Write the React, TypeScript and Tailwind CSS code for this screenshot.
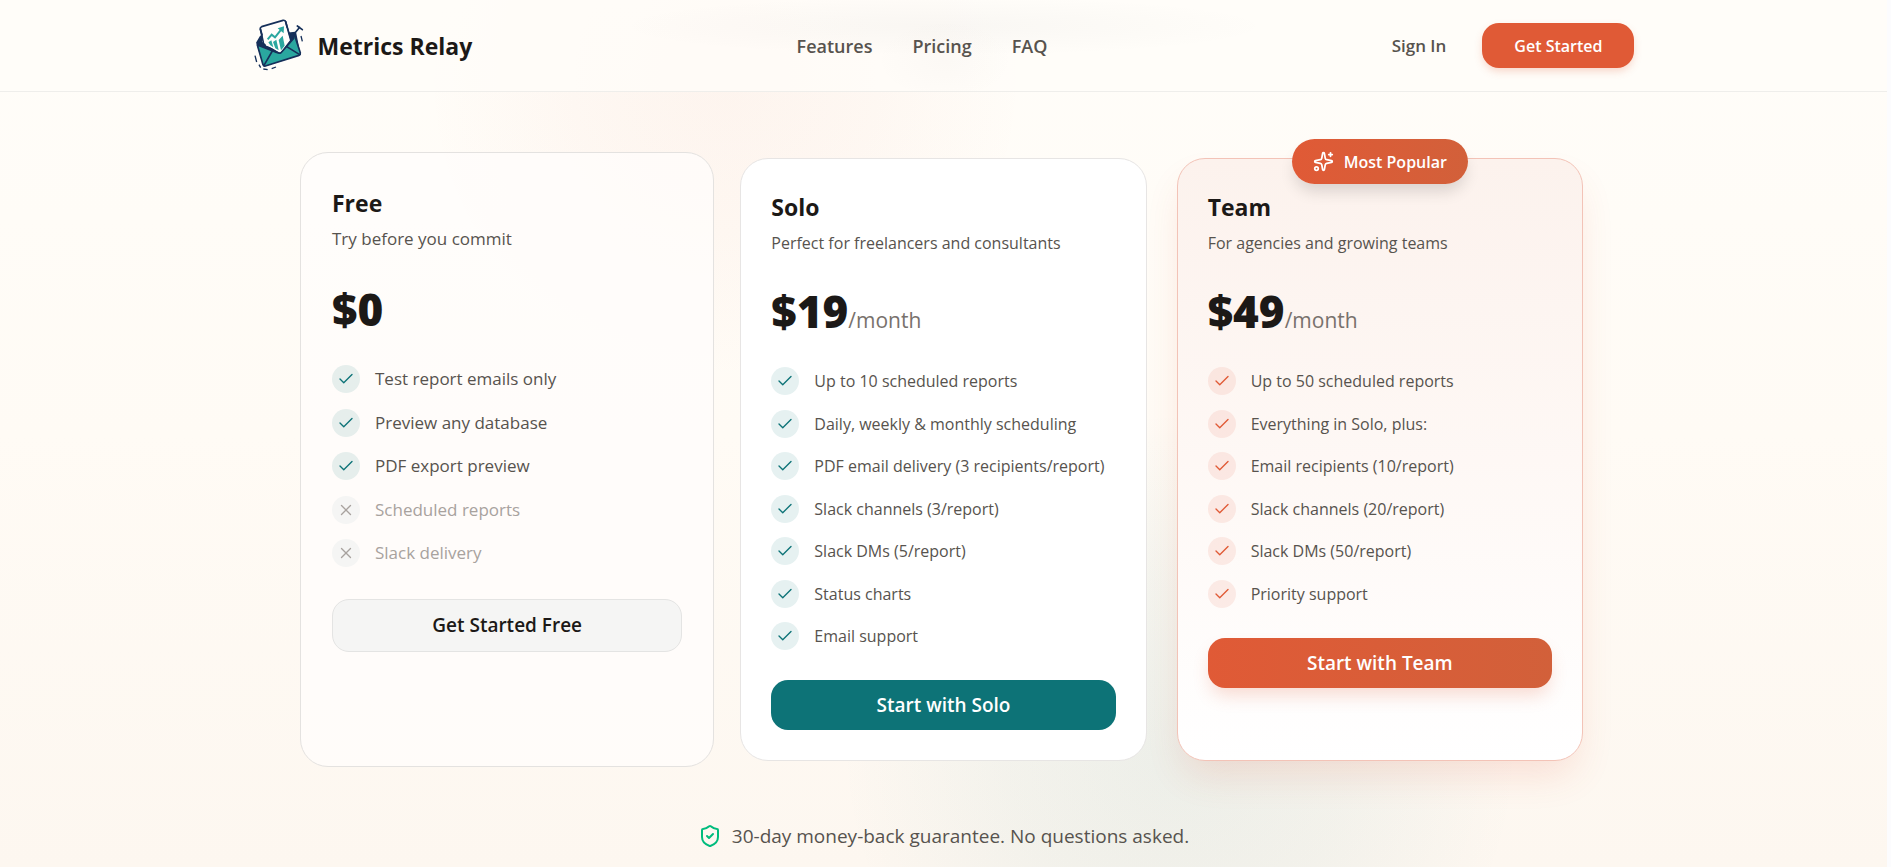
import React from "react";
import { Check, ShieldCheck, Sparkles, X } from "lucide-react";

type Tone = "free" | "solo" | "team";

interface Feature {
  label: string;
  included: boolean;
}

interface Plan {
  tone: Tone;
  name: string;
  description: string;
  price: string;
  period?: string;
  features: Feature[];
  cta: string;
}

const yes = (label: string): Feature => ({ label, included: true });
const no = (label: string): Feature => ({ label, included: false });

const plans: Plan[] = [
  {
    tone: "free",
    name: "Free",
    description: "Try before you commit",
    price: "$0",
    features: [
      yes("Test report emails only"),
      yes("Preview any database"),
      yes("PDF export preview"),
      no("Scheduled reports"),
      no("Slack delivery"),
    ],
    cta: "Get Started Free",
  },
  {
    tone: "solo",
    name: "Solo",
    description: "Perfect for freelancers and consultants",
    price: "$19",
    period: "/month",
    features: [
      yes("Up to 10 scheduled reports"),
      yes("Daily, weekly & monthly scheduling"),
      yes("PDF email delivery (3 recipients/report)"),
      yes("Slack channels (3/report)"),
      yes("Slack DMs (5/report)"),
      yes("Status charts"),
      yes("Email support"),
    ],
    cta: "Start with Solo",
  },
  {
    tone: "team",
    name: "Team",
    description: "For agencies and growing teams",
    price: "$49",
    period: "/month",
    features: [
      yes("Up to 50 scheduled reports"),
      yes("Everything in Solo, plus:"),
      yes("Email recipients (10/report)"),
      yes("Slack channels (20/report)"),
      yes("Slack DMs (50/report)"),
      yes("Priority support"),
    ],
    cta: "Start with Team",
  },
];

const cardStyles: Record<Tone, string> = {
  free: "-mx-1 -my-[6px] px-[31px] pt-8 text-[17px] border-[#e4e2e0] bg-[#fffcfb]/80",
  solo: "px-[30px] pt-[30px] text-[16px] border-[#e7e5e4] bg-white",
  team: "px-[30px] pt-[30px] text-[16px] border-[#f3c3b7] bg-linear-to-b from-[#fcf2ed] via-[#fef8f5] to-white shadow-[0_20px_38px_-8px_rgba(224,90,54,0.16)]",
};

const priceStyles: Record<Tone, string> = {
  free: "mt-8",
  solo: "mt-[30px]",
  team: "mt-[30px]",
};

const listStyles: Record<Tone, string> = {
  free: "min-h-[202px]",
  solo: "min-h-[283px]",
  team: "min-h-[241px]",
};

const buttonStyles: Record<Tone, string> = {
  free: "mt-8 h-[53px] border border-[#e4e4e3] bg-[#f5f5f4] text-[#1c1917]",
  solo: "mt-[30px] h-[50px] bg-[#0d7377] text-white",
  team: "mt-[30px] h-[50px] bg-linear-to-r from-[#e05a36] to-[#d2603a] text-white shadow-[0_10px_18px_-3px_rgba(224,90,54,0.22)]",
};

function Logo() {
  return (
    <svg viewBox="9 14 153 162" className="h-[54px] w-[51px]" aria-hidden="true">
      <g strokeLinejoin="round" strokeLinecap="round">
        <path d="M21 85 L32 66 L136 55 L149 120 L43 154 Z" fill="#16305a" stroke="#16305a" strokeWidth="5" />
        <path d="M31 44 Q30 39 35 37 L99 18 Q105 17 107 22 L122 78 L92 112 L46 96 Z" fill="#fffefb" stroke="#16305a" strokeWidth="5" />
        <path d="M22 92 L78 114 L90 115 L134 64 L151 115 Q152 121 147 123 L46 155 Q41 156 39 151 Z" fill="#2aa79f" stroke="#16305a" strokeWidth="5" />
        <path d="M42 153 L67 110 M149 121 L109 96" fill="none" stroke="#16305a" strokeWidth="5" />
        <path d="M36 82 L86 114 Q91 117 95 111 L121 76 L110 40 L38 62 Z" fill="#fffefb" />
        <path d="M34 90 L86 116 Q91 118 95 113 L131 72" fill="none" stroke="#16305a" strokeWidth="5" />
        <path d="M31 44 L40 84 M107 22 L122 76" fill="none" stroke="#16305a" strokeWidth="5" />
        <path d="M133 58 L149 39 M142 35 L157 46" fill="none" stroke="#16305a" strokeWidth="5" />
      </g>
      <path d="M55 84 L64 78 L70 99 L61 93 Z M69 83 L79 76 L86 108 L76 102 Z M86 77 L98 64 L104 94 L93 108 Z" fill="#2aa79f" />
      <path d="M53 75 L65 61 L75 69 L94 45" fill="none" stroke="#2aa79f" strokeWidth="6" />
      <path d="M83 42 L102 36 L101 57 Z" fill="#2aa79f" />
      <path d="M15 124 L20 143 M153 65 L157 81 M27 151 L32 160 M40 164 L53 166 M65 163 L78 158" fill="none" stroke="#16305a" strokeWidth="4" />
    </svg>
  );
}

function Header() {
  return (
    <header className="border-b border-[#efeeeb] bg-[radial-gradient(ellipse_330px_30px_at_50%_26px,rgba(90,90,90,0.035),transparent),radial-gradient(ellipse_70px_40px_at_945px_60px,rgba(90,90,90,0.02),transparent)] bg-[#fffdf9]/80">
      <div className="mx-auto flex h-[91px] max-w-[1382px] items-center justify-between">
        <a href="#top" className="flex items-center gap-[14px] text-[23px] font-bold leading-8 text-[#1c1917]">
          <Logo />
          Metrics Relay
        </a>
        <nav className="flex items-center gap-10 text-[18px] font-semibold leading-7">
          <a href="#features">Features</a>
          <a href="#pricing">Pricing</a>
          <a href="#faq">FAQ</a>
        </nav>
        <div className="flex items-center gap-4">
          <button type="button" className="px-5 text-[17px] font-semibold leading-7">
            Sign In
          </button>
          <button
            type="button"
            className="h-[45px] rounded-[17px] bg-[#e05a36] px-8 text-[16px] font-semibold text-white shadow-[0_4px_8px_-1px_rgba(224,90,54,0.25)]"
          >
            Get Started
          </button>
        </div>
      </div>
    </header>
  );
}

function FeatureRow({ feature, tone }: { feature: Feature; tone: Tone }) {
  const badge = !feature.included
    ? "bg-[#f5f5f4] text-[#a8a29e]"
    : tone === "team"
      ? "bg-[#e05a36]/10 text-[#e05a36]"
      : "bg-[#0d7377]/10 text-[#0d7377]";
  const Icon = feature.included ? Check : X;
  return (
    <li className="flex items-center gap-[15px]">
      <span className={`flex size-7 shrink-0 items-center justify-center rounded-full ${badge}`}>
        <Icon size={18} strokeWidth={1.8} />
      </span>
      <span className={`whitespace-nowrap leading-7 ${feature.included ? "" : "text-[#a8a29e]"}`}>
        {feature.label}
      </span>
    </li>
  );
}

function PlanCard({ plan }: { plan: Plan }) {
  const { tone } = plan;
  return (
    <section className={`relative rounded-[28px] border pb-[30px] ${cardStyles[tone]}`}>
      {tone === "team" && (
        <div className="absolute inset-x-0 -top-5 flex justify-center">
          <span className="flex h-[45px] items-center gap-[10px] rounded-full bg-linear-to-r from-[#e05a36] to-[#d2603a] px-[21px] text-[16px] font-semibold text-white shadow-[0_10px_16px_-3px_rgba(0,0,0,0.14)]">
            <Sparkles size={21} />
            Most Popular
          </span>
        </div>
      )}
      <h2 className="text-[23px] font-bold leading-9 text-[#1c1917]">{plan.name}</h2>
      <p className="mt-1 leading-7">{plan.description}</p>
      <p className={`flex items-baseline ${priceStyles[tone]}`}>
        <span className="text-[44px] font-extrabold leading-[48px] text-[#1c1917]">{plan.price}</span>
        {plan.period && <span className="text-[21px] leading-7 text-[#78716c]">{plan.period}</span>}
      </p>
      <ul className={`mt-8 flex flex-col justify-between ${listStyles[tone]}`}>
        {plan.features.map((feature) => (
          <FeatureRow key={feature.label} feature={feature} tone={tone} />
        ))}
      </ul>
      <button type="button" className={`w-full rounded-[17px] text-[19px] font-semibold ${buttonStyles[tone]}`}>
        {plan.cta}
      </button>
    </section>
  );
}

export default function App() {
  return (
    <div id="top" className="min-h-screen bg-[#fcfcfe] pr-1 font-['Open_Sans','Noto_Sans',sans-serif] text-[#57534e]">
      <div className="min-h-screen bg-[radial-gradient(circle_300px_at_725px_80px,rgba(224,90,54,0.05),rgba(224,90,54,0.03)_50%,transparent),radial-gradient(circle_340px_at_1180px_750px,rgba(13,115,119,0.07),rgba(13,115,119,0.045)_50%,transparent),linear-gradient(to_bottom,#fffdf9,#fffbf5_50%,#fdf7f0)]">
        <Header />
        <main className="px-8 pb-4 pt-[66px]">
          <div className="mx-auto grid max-w-[1279px] grid-cols-3 gap-[30px]">
            {plans.map((plan) => (
              <PlanCard key={plan.name} plan={plan} />
            ))}
          </div>
          <p className="mt-[61px] flex items-center justify-center gap-[10px] text-[19px] leading-7">
            <ShieldCheck size={24} className="text-emerald-500" />
            30-day money-back guarantee. No questions asked.
          </p>
        </main>
      </div>
    </div>
  );
}
